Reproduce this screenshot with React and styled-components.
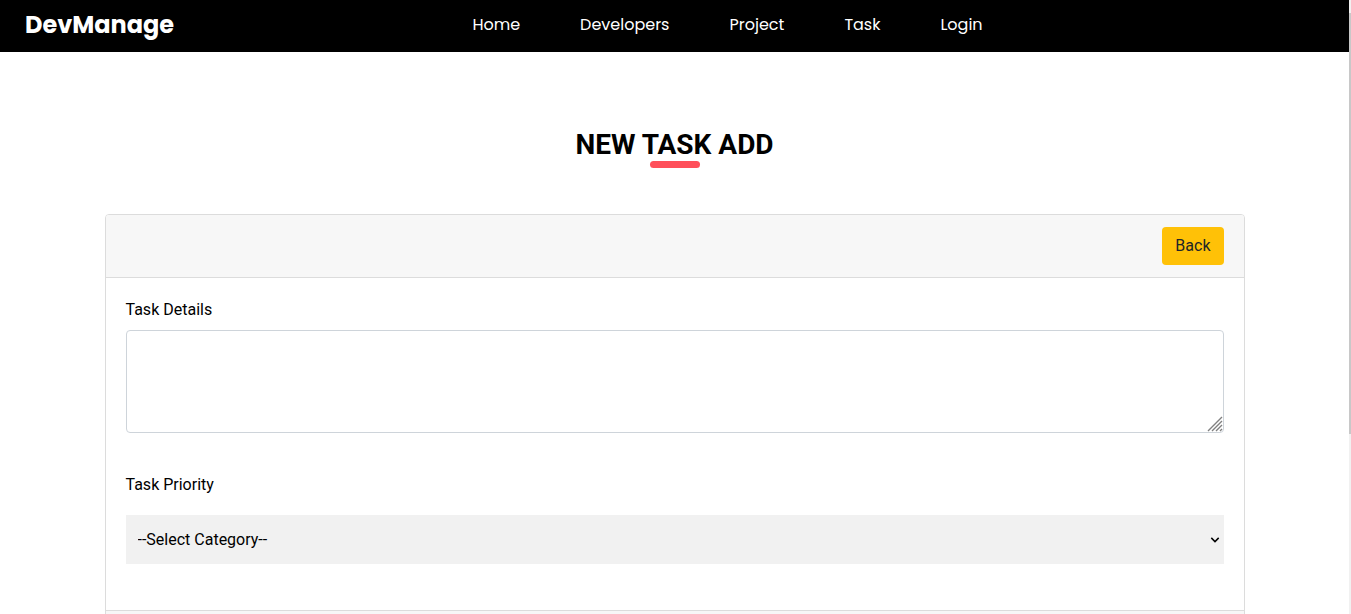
import React from "react";
import styled, { createGlobalStyle } from "styled-components";

const GlobalStyle = createGlobalStyle`
  *, *::before, *::after { box-sizing: border-box; }
  body {
    margin: 0;
    background: #fff;
    color: #000;
    font-family: Roboto, sans-serif;
    font-size: 16px;
    line-height: 24px;
  }
`;

const Shell = styled.div`
  display: flex;
  height: 100vh;
`;

const Page = styled.div`
  flex: 1;
  min-width: 0;
  overflow-y: auto;
  scrollbar-width: none;
`;

const ScrollTrack = styled.div`
  flex: none;
  width: 2px;
  padding-top: 13px;
  background: #f1f1f1;
`;

const ScrollThumb = styled.div`
  height: 70%;
  background: #c8c8c8;
`;

const NavBar = styled.header`
  display: grid;
  grid-template-columns: 1fr auto 1fr;
  align-items: center;
  height: 52px;
  padding: 0 25px 2px;
  background: #000;
  font-family: Poppins, Inter, sans-serif;
`;

const Brand = styled.a`
  justify-self: start;
  color: #fff;
  font-size: 24px;
  font-weight: 700;
  text-decoration: none;
`;

const NavList = styled.nav`
  display: flex;
  gap: 60px;
  padding-left: 106px;
`;

const NavLink = styled.a`
  color: #fff;
  font-size: 16px;
  text-decoration: none;
`;

const Main = styled.main`
  width: 100%;
  max-width: 1140px;
  margin: 0 auto;
  padding: 76px 0 48px;
`;

const Title = styled.h1`
  display: flex;
  flex-direction: column;
  align-items: center;
  margin: 0 0 46px;
  font-size: 28px;
  line-height: 33px;
  font-weight: 700;
  text-transform: uppercase;

  &::after {
    content: "";
    width: 50px;
    height: 7px;
    border-radius: 4px;
    background: #ff4f5a;
  }
`;

const Card = styled.form`
  border: 1px solid #dcdcdc;
  border-radius: 4px;
  overflow: hidden;
`;

const CardHeader = styled.div`
  display: flex;
  justify-content: flex-end;
  padding: 12px 20px;
  border-bottom: 1px solid #dcdcdc;
  background: #f7f7f7;
`;

const CardBody = styled.div`
  display: flex;
  flex-direction: column;
  gap: 40px;
  padding: 20px 20px 46px;
`;

const CardFooter = styled.div`
  min-height: 62px;
  border-top: 1px solid #dcdcdc;
  background: #f7f7f7;
`;

const Button = styled.button`
  height: 38px;
  padding: 0 13px;
  border: 0;
  border-radius: 4px;
  background: #ffc107;
  color: #212529;
  font: inherit;
  cursor: pointer;
`;

const Field = styled.div`
  display: flex;
  flex-direction: column;
  gap: ${(p) => p.$gap}px;
`;

const ControlWrap = styled.div`
  position: relative;
  display: flex;
`;

const TextArea = styled.textarea`
  width: 100%;
  height: 103px;
  padding: 6px 12px;
  border: 1px solid #ced4da;
  border-radius: 4px;
  background: #fff;
  font: inherit;
  resize: vertical;

  &::-webkit-resizer { background: transparent; }
`;

const Grip = styled.svg`
  position: absolute;
  right: 1px;
  bottom: 1px;
  pointer-events: none;
`;

const Select = styled.select`
  appearance: none;
  width: 100%;
  height: 49px;
  padding: 0 24px 0 12px;
  border: 0;
  border-radius: 0;
  background: #f1f1f1;
  color: #000;
  font: inherit;
`;

const Chevron = styled.svg`
  position: absolute;
  right: 4px;
  bottom: 20px;
  pointer-events: none;
`;

const links = ["Home", "Developers", "Project", "Task", "Login"];

export default function App() {
  return (
    <>
      <GlobalStyle />
      <Shell>
        <Page>
          <NavBar>
            <Brand href="#home">DevManage</Brand>
            <NavList>
              {links.map((name) => (
                <NavLink key={name} href={`#${name.toLowerCase()}`}>{name}</NavLink>
              ))}
            </NavList>
          </NavBar>
          <Main>
            <Title>New Task Add</Title>
            <Card>
              <CardHeader>
                <Button type="button">Back</Button>
              </CardHeader>
              <CardBody>
                <Field $gap={8}>
                  <label htmlFor="details">Task Details</label>
                  <ControlWrap>
                    <TextArea id="details" />
                    <Grip width="16" height="16" viewBox="0 0 16 16" stroke="#808080" strokeWidth="1.4" aria-hidden="true">
                      <path d="M1 15L15 1M5 15L15 5M9 15L15 9M13 15L15 13" />
                    </Grip>
                  </ControlWrap>
                </Field>
                <Field $gap={18}>
                  <label htmlFor="priority">Task Priority</label>
                  <ControlWrap>
                    <Select id="priority">
                      <option>--Select Category--</option>
                    </Select>
                    <Chevron width="10" height="9" viewBox="0 0 10 9" fill="none" stroke="#000" strokeWidth="1.5" aria-hidden="true">
                      <path d="M1.3 2.9L5 6.6L8.7 2.9" />
                    </Chevron>
                  </ControlWrap>
                </Field>
              </CardBody>
              <CardFooter />
            </Card>
          </Main>
        </Page>
        <ScrollTrack>
          <ScrollThumb />
        </ScrollTrack>
      </Shell>
    </>
  );
}
